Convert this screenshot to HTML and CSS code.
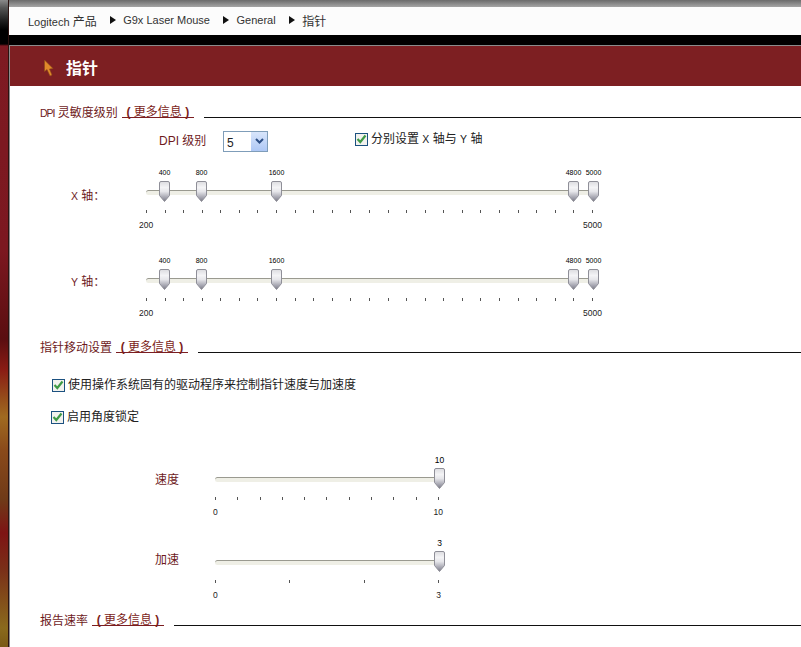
FILE: index.html
```html
<!DOCTYPE html>
<html lang="zh">
<head>
<meta charset="utf-8">
<title>指针</title>
<link rel="stylesheet" href="styles.css">
</head>
<body>
<svg class="defs" width="0" height="0" aria-hidden="true">
  <defs>
    <linearGradient id="thumbfill" x1="0" y1="0" x2="0" y2="1">
      <stop offset="0" stop-color="#dcdce0"/>
      <stop offset=".3" stop-color="#f4f4f6"/>
      <stop offset=".5" stop-color="#e6e6ea"/>
      <stop offset=".85" stop-color="#9a9aa6"/>
      <stop offset="1" stop-color="#77777f"/>
    </linearGradient>
    <symbol id="thumbshape" viewBox="0 0 11 21">
      <path d="M2 .5 H9 Q10.500 .5 10.500 2 V14.500 L5.500 20.500 L.5 14.500 V2 Q.5 .5 2 .5 Z" fill="url(#thumbfill)" stroke="#8f8f98" stroke-width="1"/>
    </symbol>
    <symbol id="tick" viewBox="0 0 11 10">
      <path d="M1.500 5 L4.300 8 L9.500 1.500" fill="none" stroke="#3f9a46" stroke-width="2.200"/>
    </symbol>
  </defs>
</svg>
<div class="app">
  <div class="strip"></div>
  <div class="main">
    <div class="topbar"></div>
    <nav class="crumbs">
      <span>Logitech <span class="cjk">产品</span></span><i class="arrow"></i>
      <span>G9x Laser Mouse</span><i class="arrow"></i>
      <span>General</span><i class="arrow"></i>
      <span class="cjk">指针</span>
    </nav>
    <div class="blackbar"></div>
    <div class="content">
      <header class="title">
        <svg class="cursor" width="14" height="20" viewBox="0 0 14 20"><path d="M2.500 3 L2.500 14.500 L5 12.500 L8 19 L10 18 L7.500 12 L11 11.500 Z" fill="#e08a2a" stroke="#8f4a1a" stroke-width=".6"/></svg>
        <h1>指针</h1>
      </header>

      <section class="sec sec-dpi">
        <div class="sec-head"><span class="sec-name"><span class="latin tight">DPI</span> 灵敏度级别</span><a class="more"><b>(</b> 更多信息 <b>)</b></a><span class="rule"></span></div>
        <div class="dpi-row">
          <span class="dpi-label">DPI 级别</span>
          <span class="select"><span class="select-val">5</span><span class="select-btn"><svg width="9" height="6" viewBox="0 0 9 6"><path d="M1 1 L4.500 4.500 L8 1" fill="none" stroke="#2d4f86" stroke-width="2"/></svg></span></span>
          <label class="check check-xy"><span class="box"><svg width="11" height="10"><use href="#tick"/></svg></span><span>分别设置 <span class="latin">X</span> 轴与 <span class="latin">Y</span> 轴</span></label>
        </div>
        <div class="slider-row row-x">
          <span class="axis"><span class="latin">X</span> 轴：</span>
          <div class="slider s-dpi">
            <b class="val" style="left:18.500px">400</b><b class="val" style="left:55.500px">800</b><b class="val" style="left:130.500px">1600</b><b class="val" style="left:427.500px">4800</b><b class="val" style="left:447.500px">5000</b>
            <span class="track"></span>
            <svg class="thumb" style="left:18px"><use href="#thumbshape"/></svg><svg class="thumb" style="left:55px"><use href="#thumbshape"/></svg><svg class="thumb" style="left:130px"><use href="#thumbshape"/></svg><svg class="thumb" style="left:427px"><use href="#thumbshape"/></svg><svg class="thumb" style="left:447px"><use href="#thumbshape"/></svg>
            <div class="ticks"><i></i><i></i><i></i><i></i><i></i><i></i><i></i><i></i><i></i><i></i><i></i><i></i><i></i><i></i><i></i><i></i><i></i><i></i><i></i><i></i><i></i><i></i><i></i><i></i><i></i></div>
            <div class="ends"><span>200</span><span>5000</span></div>
          </div>
        </div>
        <div class="slider-row row-y">
          <span class="axis"><span class="latin">Y</span> 轴：</span>
          <div class="slider s-dpi">
            <b class="val" style="left:18.500px">400</b><b class="val" style="left:55.500px">800</b><b class="val" style="left:130.500px">1600</b><b class="val" style="left:427.500px">4800</b><b class="val" style="left:447.500px">5000</b>
            <span class="track"></span>
            <svg class="thumb" style="left:18px"><use href="#thumbshape"/></svg><svg class="thumb" style="left:55px"><use href="#thumbshape"/></svg><svg class="thumb" style="left:130px"><use href="#thumbshape"/></svg><svg class="thumb" style="left:427px"><use href="#thumbshape"/></svg><svg class="thumb" style="left:447px"><use href="#thumbshape"/></svg>
            <div class="ticks"><i></i><i></i><i></i><i></i><i></i><i></i><i></i><i></i><i></i><i></i><i></i><i></i><i></i><i></i><i></i><i></i><i></i><i></i><i></i><i></i><i></i><i></i><i></i><i></i><i></i></div>
            <div class="ends"><span>200</span><span>5000</span></div>
          </div>
        </div>
      </section>

      <section class="sec sec-move">
        <div class="sec-head"><span class="sec-name">指针移动设置</span><a class="more"><b>(</b> 更多信息 <b>)</b></a><span class="rule"></span></div>
        <label class="check check-a"><span class="box"><svg width="11" height="10"><use href="#tick"/></svg></span>使用操作系统固有的驱动程序来控制指针速度与加速度</label>
        <label class="check check-b"><span class="box"><svg width="11" height="10"><use href="#tick"/></svg></span>启用角度锁定</label>
        <div class="slider-row row-speed">
          <span class="axis axis-wide">速度</span>
          <div class="slider s-small">
            <b class="val val-lg" style="left:224.500px">10</b>
            <span class="track"></span>
            <svg class="thumb" style="left:224px"><use href="#thumbshape"/></svg>
            <div class="ticks"><i></i><i></i><i></i><i></i><i></i><i></i><i></i><i></i><i></i><i></i><i></i></div>
            <div class="ends"><span>0</span><span>10</span></div>
          </div>
        </div>
        <div class="slider-row row-accel">
          <span class="axis axis-wide">加速</span>
          <div class="slider s-small">
            <b class="val val-lg" style="left:224.500px">3</b>
            <span class="track"></span>
            <svg class="thumb" style="left:224px"><use href="#thumbshape"/></svg>
            <div class="ticks"><i></i><i></i><i></i><i></i></div>
            <div class="ends ends-short"><span>0</span><span>3</span></div>
          </div>
        </div>
      </section>

      <section class="sec sec-rate">
        <div class="sec-head"><span class="sec-name">报告速率</span><a class="more"><b>(</b> 更多信息 <b>)</b></a><span class="rule"></span></div>
      </section>
    </div>
  </div>
</div>
</body>
</html>
```
FILE: styles.css
```css
* { box-sizing: border-box; }
html, body { margin: 0; padding: 0; height: 100%; overflow: hidden; background: #fff; }
body { font-family: "Liberation Sans", "Noto Sans CJK SC", sans-serif; font-size: 12px; color: #222; }
.defs { position: absolute; }
.app { display: flex; width: 801px; height: 647px; overflow: hidden; }
.strip {
  width: 9px; flex: none;
  border-right: 1px solid #2c1210;
  background: linear-gradient(180deg, #8a8a8a 0, #555 8px, #222 20px, #000 30px, #000 44px, #7e1a22 46px, #7c1820 250px, #5a0e10 339px, #8a1c14 370px, #96501a 400px, #a06a20 417px, #8a4a1a 450px, #6f3a18 500px, #7e1414 533px, #7a3018 570px, #8a6a1c 628px, #7a5a16 647px);
}
.main { flex: 1; min-width: 0; display: flex; flex-direction: column; }
.topbar { height: 7px; background: linear-gradient(180deg, #6b6b6b, #a5a5a5); }
.crumbs { height: 28px; background: #fcfcfc; display: flex; align-items: center; padding: 0 0 2px 19px; color: #333; font-size: 11px; white-space: nowrap; }
.cjk { font-size: 12px; }
.arrow { width: 0; height: 0; margin: 0 7.500px 0 13px; border-left: 6px solid #111; border-top: 4.500px solid transparent; border-bottom: 4.500px solid transparent; }
.blackbar { height: 10px; background: #000; }
.content { flex: 1; border-left: 1px solid #8b8b8b; border-top: 1px solid #8b8b8b; min-height: 0; }
.title { height: 40px; background: #7d1f22; display: flex; align-items: center; padding: 5px 0 0 32px; gap: 10px; color: #fff; }
.cursor { flex: none; margin-top: -3px; }
.title h1 { margin: 0; font-size: 16px; line-height: 18px; font-weight: 700; }
.sec-head { display: flex; align-items: flex-end; padding-left: 30px; height: 16px; color: #6e1a1c; white-space: nowrap; line-height: 14px; }
.sec-name { margin-bottom: -2px; }
.latin { font-size: 10.500px; }
.tight { letter-spacing: -1px; }
.sec-dpi { padding-top: 16px; }
.more { margin-left: 4px; width: 72px; padding-top: 3px; text-align: center; color: #7b1d20; border-bottom: 1px solid #7b1d20; height: 16px; line-height: 14px; }
.rule { flex: 1; margin-left: 10px; border-bottom: 1px solid #111; }
.dpi-row { display: flex; align-items: center; height: 22px; margin-top: 12px; padding-left: 149px; }
.dpi-label { color: #6e1a1c; width: 64px; margin-top: -4px; }
.select { display: flex; width: 45px; height: 21px; border: 1px solid #7f9db9; background: #fff; justify-content: space-between; }
.select-val { padding: 4px 0 0 3px; font-size: 12px; line-height: 14px; }
.select-btn { width: 16px; background: linear-gradient(#d8e5fb, #aec8f5); display: flex; align-items: center; justify-content: center; }
.check { display: flex; align-items: center; gap: 3px; color: #222; white-space: nowrap; line-height: 14px; }
.box { width: 13px; height: 13px; border: 1px solid #1c5180; background: #f2f2ee; display: flex; align-items: center; justify-content: center; flex: none; }
.check-xy { margin: -4px 0 0 87px; }
.slider-row { display: flex; }
.axis { width: 136px; padding: 21px 0 0 61px; color: #6e1a1c; line-height: 14px; white-space: nowrap; flex: none; }
.row-x { margin-top: 16px; }
.row-y { margin-top: 24px; }
.row-y .axis { padding-top: 19px; }
.slider { position: relative; height: 64px; }
.s-dpi { width: 462px; }
.s-small { width: 240px; }
.val { position: absolute; top: 0; width: 30px; margin-left: -15px; text-align: center; font-weight: 400; font-size: 7px; line-height: 10px; color: #000; }
.val-lg { font-size: 8.500px; }
.track { position: absolute; left: 0; top: 22px; height: 5px; background: #efefe6; border-top: 1px solid #9a9a90; border-radius: 3px 0 0 3px; }
.s-dpi .track { width: 447px; }
.s-small .track { width: 224px; }
.thumb { position: absolute; top: 13px; width: 11px; height: 21px; margin-left: -5px; overflow: visible; }
.ticks { position: absolute; left: 0; top: 42px; display: flex; justify-content: space-between; }
.s-dpi .ticks { width: 447px; }
.s-small .ticks { width: 224px; }
.ticks i { width: 1px; height: 3px; background: #555; }
.ends { position: absolute; top: 52px; left: -7px; display: flex; justify-content: space-between; font-size: 8.500px; line-height: 10px; color: #222; }
.s-dpi .ends { width: 463px; }
.s-small .ends { width: 230px; left: -2px; }
.s-small .ends-short { width: 228px; }
.sec-move { padding-top: 17px; }
.check-a { margin: 24px 0 0 42px; height: 16px; }
.check-b { margin: 16px 0 0 41px; height: 16px; }
.axis-wide { width: 205px; padding: 18px 0 0 145px; }
.row-speed { margin-top: 30px; }
.row-accel { margin-top: 19px; }
.row-accel .axis-wide { padding-top: 15px; }
.sec-rate { padding-top: 8px; }
```
